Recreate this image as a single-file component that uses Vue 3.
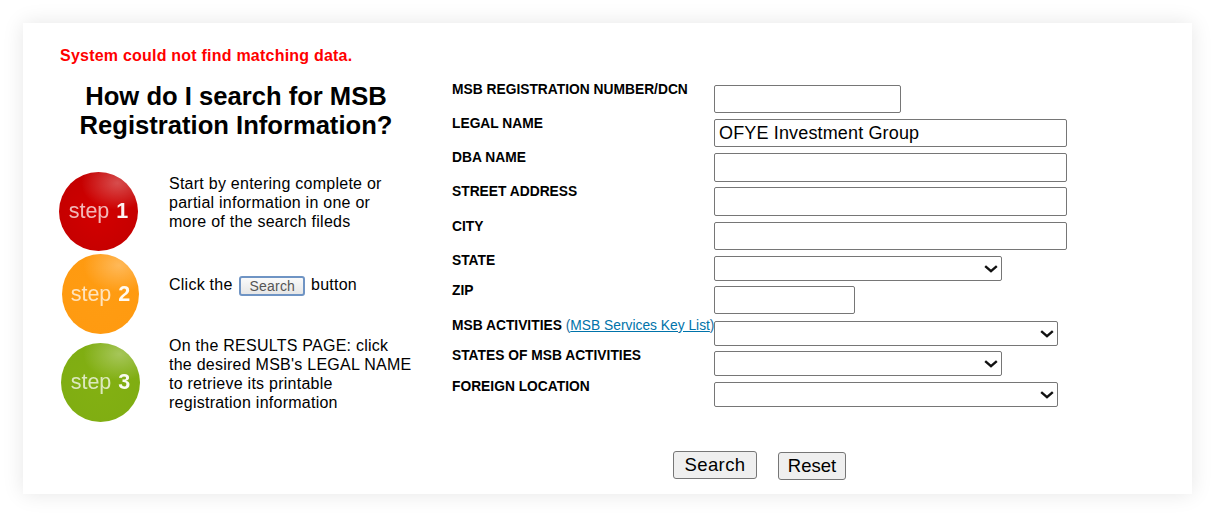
<script setup>
const steps = [
  {n: 1, color: 'red', lines: 'Start by entering complete or partial information in one or more of the search fileds'},
  {n: 2, color: 'orange', button: true},
  {n: 3, color: 'green', lines: "On the RESULTS PAGE: click the desired MSB's LEGAL NAME to retrieve its printable registration information"},
]

const fields = [
  {label: 'MSB REGISTRATION NUMBER/DCN', type: 'input', size: 'short'},
  {label: 'LEGAL NAME', type: 'input', size: 'long', value: 'OFYE Investment Group'},
  {label: 'DBA NAME', type: 'input', size: 'long'},
  {label: 'STREET ADDRESS', type: 'input', size: 'long'},
  {label: 'CITY', type: 'input', size: 'long'},
  {label: 'STATE', type: 'select', size: 'mid'},
  {label: 'ZIP', type: 'input', size: 'zip', tall: true},
  {label: 'MSB ACTIVITIES', type: 'select', size: 'wide', link: true},
  {label: 'STATES OF MSB ACTIVITIES', type: 'select', size: 'mid', tall: true},
  {label: 'FOREIGN LOCATION', type: 'select', size: 'wide'},
]
</script>

<template>
  <div class="page">
    <div class="card">
      <p class="error">System could not find matching data.</p>
      <div class="columns">
        <div class="help">
          <h2>How do I search for MSB Registration Information?</h2>
          <div v-for="step in steps" :key="step.n" class="step" :class="'step-' + step.n">
            <div class="ball" :class="step.color">
              <span class="word">step</span><b>{{ step.n }}</b>
            </div>
            <p v-if="step.lines">{{ step.lines }}</p>
            <p v-else>Click the <button class="mini" type="button">Search</button> button</p>
          </div>
        </div>
        <form class="form" @submit.prevent>
          <div v-for="field in fields" :key="field.label" class="row" :class="[field.type, {tall: field.tall}]">
            <label>{{ field.label }}<span v-if="field.link" class="key"> (<a href="#">MSB Services Key List</a>)</span></label>
            <input v-if="field.type === 'input'" :class="field.size" type="text" :value="field.value">
            <div v-else class="select-wrap" :class="field.size">
              <select><option></option></select>
              <svg class="chevron" viewBox="0 0 14 8" fill="none" stroke="#111" stroke-width="2.4">
                <polyline points="1.2 1.2 7 6.2 12.8 1.2"/>
              </svg>
            </div>
          </div>
          <div class="actions">
            <button class="search" type="submit">Search</button>
            <button class="reset" type="reset">Reset</button>
          </div>
        </form>
      </div>
    </div>
  </div>
</template>

<style>
html, body {
  background: #fff;
}
</style>

<style scoped>
.page {
  padding: 23px;
  font-family: "Liberation Sans", Arial, sans-serif;
  color: #000;
}

.card {
  box-sizing: border-box;
  width: 1169px;
  height: 471px;
  padding: 23px 37px 0;
  background: #fff;
  box-shadow: 0 0 20px rgba(0, 0, 0, 0.1);
}

.error {
  margin: 0;
  font-size: 16px;
  line-height: 19px;
  font-weight: 700;
  letter-spacing: 0.22px;
  color: #f00;
}

.columns {
  display: flex;
  margin-top: 16px;
}

.help {
  width: 392px;
  flex: none;
}

.help h2 {
  width: 352px;
  margin: 1px 0 31px;
  font-size: 25.6px;
  line-height: 29px;
  font-weight: 700;
  text-align: center;
}

.step {
  display: grid;
  grid-template-columns: 109px 246px;
  align-items: center;
}

.step-1 {
  height: 81px;
}

.step-2 {
  height: 84px;
}

.step-3 {
  height: 91px;
}

.step p {
  margin: 0 0 19px;
  font-size: 16px;
  line-height: 19px;
  letter-spacing: 0.25px;
}

.step-1 p {
  max-width: 225px;
}

.step-2 p {
  margin-bottom: 17px;
}

.step-3 p {
  margin-bottom: 17px;
}

.ball {
  position: relative;
  width: 79px;
  height: 79px;
  border-radius: 50%;
  overflow: hidden;
  display: flex;
  align-items: center;
  justify-content: center;
  gap: 7px;
  font-size: 21.5px;
  color: #fff;
  filter: blur(0.4px);
}

.step-1 .ball {
  margin-left: -1px;
}

.step-2 .ball {
  width: 77px;
  height: 80px;
  margin-left: 2px;
}

.step-3 .ball {
  margin-left: 1px;
}

.ball::after {
  content: "";
  position: absolute;
  inset: 0;
  background: radial-gradient(ellipse 46% 34% at 74% 14%, rgba(255, 255, 255, 0.3), rgba(255, 255, 255, 0));
}

.ball .word {
  opacity: 0.72;
}

.ball b {
  opacity: 0.95;
}

.red {
  background: radial-gradient(circle at 50% 55%, #d20000 0%, #c50000 70%, #b30808 92%, #d86060 100%);
}

.orange {
  background: radial-gradient(circle at 50% 55%, #ff9c12 0%, #ff9a10 78%, #ffa326 92%, #ffd090 100%);
}

.green {
  background: radial-gradient(circle at 50% 55%, #83b012 0%, #7fad12 80%, #86b31c 92%, #c3da88 100%);
}

.mini {
  width: 66px;
  height: 20px;
  margin: 0 1px 0 2px;
  padding: 0;
  vertical-align: -1px;
  font-family: inherit;
  font-size: 14px;
  letter-spacing: 0.2px;
  color: #555;
  border: 2px solid #6f94c4;
  border-radius: 3px;
  background: linear-gradient(#fafafa, #e6e6e6);
}

.form {
  flex: 1;
  margin-top: 3.6px;
}

.row {
  display: flex;
  align-items: flex-start;
}

.row.input {
  height: 34.25px;
}

.row.input.tall {
  height: 35px;
}

.row.select {
  height: 30px;
}

.row.select.tall {
  height: 31px;
}

.row label {
  width: 262px;
  flex: none;
  margin-top: -3px;
  font-size: 13.8px;
  line-height: 16px;
  font-weight: 700;
  white-space: nowrap;
}

.key {
  font-weight: 400;
  color: #1a6d9e;
}

.key a {
  color: #0073aa;
}

.row input,
.row select {
  box-sizing: border-box;
  margin: 0;
  border: 1px solid #767676;
  border-radius: 2px;
  background: #fff;
  color: #000;
  font-family: inherit;
}

.row input {
  flex: none;
  height: 28.6px;
  padding: 0 4px;
  font-size: 18px;
  letter-spacing: 0.15px;
}

.select-wrap {
  position: relative;
  flex: none;
  height: 25px;
}

.row select {
  display: block;
  width: 100%;
  height: 25px;
  font-size: 18px;
  appearance: none;
}

.chevron {
  position: absolute;
  top: 9px;
  right: 4px;
  width: 14px;
  height: 8px;
  pointer-events: none;
}

.short {
  width: 187px;
}

.long {
  width: 353px;
}

.mid {
  width: 288px;
}

.zip {
  width: 141px;
}

.wide {
  width: 344px;
}

.actions {
  display: flex;
  align-items: flex-start;
  gap: 21px;
  margin: 39px 0 0 221px;
}

.actions button {
  box-sizing: border-box;
  height: 28.5px;
  padding: 0;
  border: 1px solid #767676;
  border-radius: 3px;
  background: #efefef;
  color: #000;
  font-family: inherit;
  font-size: 18.5px;
}

.search {
  width: 84px;
  font-size: 19px;
  letter-spacing: 0.4px;
}

.reset {
  width: 68px;
  margin-top: 1px;
}
</style>
